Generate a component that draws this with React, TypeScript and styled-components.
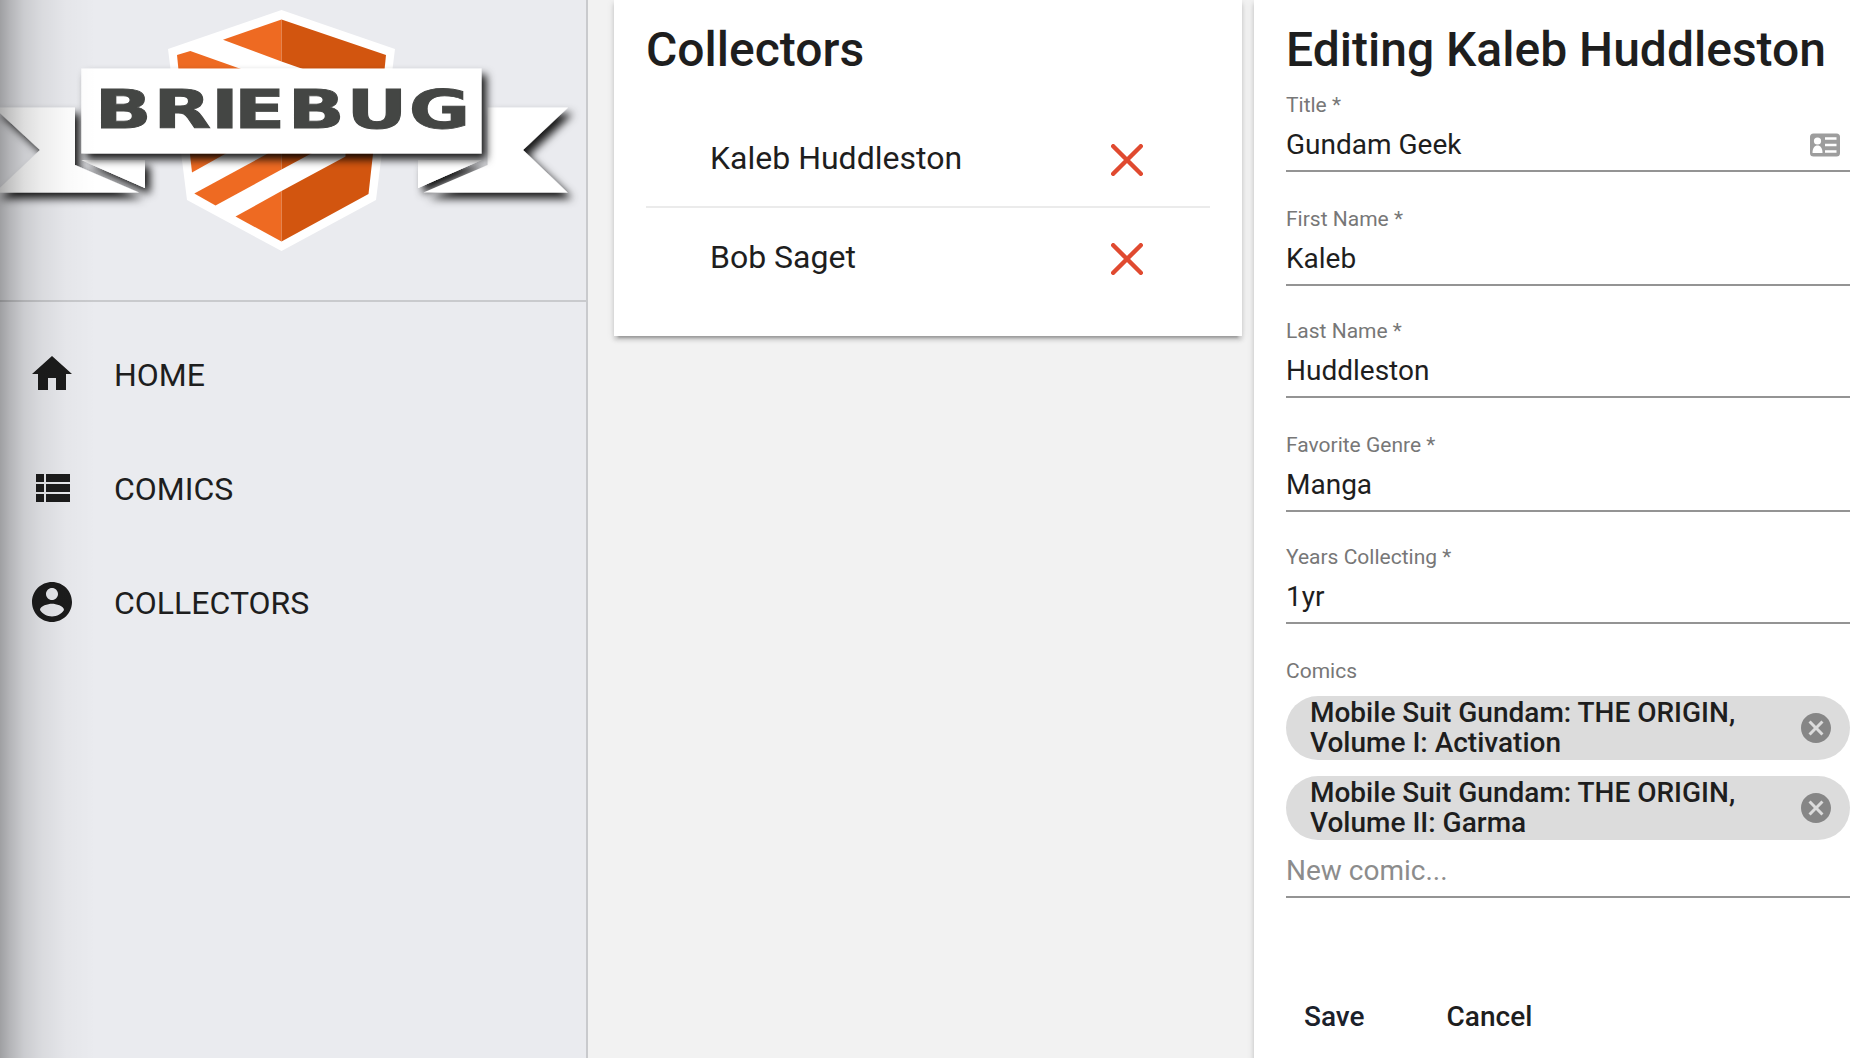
import React from 'react';
import styled, { createGlobalStyle } from 'styled-components';

const GlobalStyle = createGlobalStyle`
  * { box-sizing: border-box; }
  body {
    margin: 0;
    background: #f2f2f2;
    color: #1e1e1e;
    font-family: Roboto, "Liberation Sans", sans-serif;
    overflow: hidden;
  }
`;

const Page = styled.div`
  display: flex;
  width: 1866px;
  height: 1058px;
  overflow: hidden;
`;

const Sidebar = styled.aside`
  position: relative;
  flex: none;
  width: 588px;
  height: 100%;
  background: #eaebef;
  border-right: 2px solid #c9cacd;
`;

const EdgeShade = styled.div`
  position: absolute;
  inset: 0 auto 0 0;
  width: 96px;
  pointer-events: none;
  background: linear-gradient(
    to right,
    rgba(0, 0, 0, 0.32) 0,
    rgba(0, 0, 0, 0.23) 10px,
    rgba(0, 0, 0, 0.135) 24px,
    rgba(0, 0, 0, 0.07) 42px,
    rgba(0, 0, 0, 0.025) 66px,
    rgba(0, 0, 0, 0) 96px
  );
`;

const LogoArea = styled.div`
  height: 302px;
  border-bottom: 2px solid #c9cacd;
  svg { display: block; }
`;

const Nav = styled.nav`
  display: flex;
  flex-direction: column;
  padding-top: 15px;
`;

const NavItem = styled.a`
  display: flex;
  align-items: center;
  gap: 38px;
  height: 114px;
  padding-left: 28px;
  font-size: 32px;
  line-height: 40px;
  span { padding-top: 1px; }
`;

const NavIcon = styled.svg`
  width: 48px;
  height: 48px;
  fill: #1c1c1c;
`;

const Card = styled.section`
  background: #fff;
  box-shadow: 0 6px 2px -4px rgba(0, 0, 0, 0.2), 0 4px 4px rgba(0, 0, 0, 0.14),
    0 2px 8px rgba(0, 0, 0, 0.1);
`;

const ListCard = styled(Card)`
  flex: none;
  width: 628px;
  height: 336px;
  margin-left: 26px;
  padding: 20px 32px 0;
`;

const FormCard = styled(Card)`
  flex: none;
  width: 628px;
  height: 1100px;
  margin-left: 12px;
  padding: 20px 32px 0;
`;

const Heading = styled.h1`
  margin: 0;
  font-size: 48px;
  line-height: 60px;
  font-weight: 500;
  white-space: nowrap;
`;

const List = styled.div`
  padding-top: 30px;
`;

const ListRow = styled.div`
  display: flex;
  align-items: center;
  justify-content: space-between;
  height: 98px;
  padding: 0 67px 0 64px;
  font-size: 32px;
  &:first-child { height: 96px; box-shadow: 0 2px 0 #ebebeb; margin-bottom: 2px; }
`;

const DeleteIcon = styled.svg`
  width: 32px;
  height: 32px;
  margin-top: 4px;
  stroke: #e04a30;
  stroke-width: 4.4;
  stroke-linecap: round;
`;

const Field = styled.div<{ $gap: number }>`
  display: flex;
  flex-direction: column;
  margin-bottom: ${(p) => p.$gap}px;
  border-bottom: 2px solid #949494;
`;

const Label = styled.label`
  height: 26px;
  font-size: 21px;
  line-height: 26px;
  color: #777;
`;

const Value = styled.div`
  display: flex;
  align-items: center;
  justify-content: space-between;
  height: 52px;
  padding-right: 9px;
  font-size: 28px;
  svg { margin-top: 4px; }
`;

const Fields = styled.div`
  padding-top: 12px;
`;

const ChipList = styled.div`
  display: flex;
  flex-direction: column;
  gap: 16px;
  padding-top: 12px;
`;

const Chip = styled.div`
  display: flex;
  align-items: center;
  justify-content: space-between;
  height: 64px;
  padding: 0 16px 0 24px;
  border-radius: 32px;
  background: #dcdcdc;
  font-size: 28px;
  line-height: 30px;
  font-weight: 500;
`;

const ChipText = styled.span`
  width: 450px;
`;

const RemoveIcon = styled.svg`
  width: 36px;
  height: 36px;
  fill: #868686;
`;

const NewComic = styled.div`
  height: 56px;
  padding-top: 14px;
  font-size: 28px;
  line-height: 34px;
  color: #8c8c8c;
`;

const Actions = styled.div`
  display: flex;
  gap: 50px;
  padding: 83px 0 0 2px;
`;

const Button = styled.button<{ $tone?: string }>`
  height: 72px;
  padding: 0 16px;
  border: 0;
  background: none;
  font: 500 28px/72px Roboto, sans-serif;
  color: ${(p) => p.$tone ?? '#1e1e1e'};
`;

const icons = {
  home: 'M10 20v-6h4v6h5v-8h3L12 3 2 12h3v8z',
  list: 'M4 14h4v-4H4v4zm0 5h4v-4H4v4zM4 9h4V5H4v4zm5 5h12v-4H9v4zm0 5h12v-4H9v4zM9 5v4h12V5H9z',
  account:
    'M12 2C6.48 2 2 6.48 2 12s4.48 10 10 10 10-4.48 10-10S17.52 2 12 2zm0 3c1.66 0 3 1.34 3 3s-1.34 3-3 3-3-1.34-3-3 1.34-3 3-3zm0 14.2c-2.5 0-4.71-1.28-6-3.22.03-1.99 4-3.08 6-3.08 1.99 0 5.97 1.09 6 3.08-1.29 1.94-3.5 3.22-6 3.22z',
  cancel:
    'M12 2C6.47 2 2 6.47 2 12s4.47 10 10 10 10-4.47 10-10S17.53 2 12 2zm5 13.59L15.59 17 12 13.41 8.41 17 7 15.59 10.59 12 7 8.41 8.41 7 12 10.59 15.59 7 17 8.41 13.41 12 17 15.59z',
};

const navItems = [
  { label: 'HOME', icon: icons.home },
  { label: 'COMICS', icon: icons.list },
  { label: 'COLLECTORS', icon: icons.account },
];

const collectors = ['Kaleb Huddleston', 'Bob Saget'];

const fields = [
  { label: 'Title *', value: 'Gundam Geek', gap: 34, card: true },
  { label: 'First Name *', value: 'Kaleb', gap: 32 },
  { label: 'Last Name *', value: 'Huddleston', gap: 34 },
  { label: 'Favorite Genre *', value: 'Manga', gap: 32 },
  { label: 'Years Collecting *', value: '1yr', gap: 34 },
];

const comics = [
  'Mobile Suit Gundam: THE ORIGIN, Volume I: Activation',
  'Mobile Suit Gundam: THE ORIGIN, Volume II: Garma',
];

function Logo() {
  return (
    <svg width="586" height="300" viewBox="0 0 586 300">
      <defs>
        <filter id="drop" filterUnits="userSpaceOnUse" x="-80" y="40" width="680" height="200">
          <feDropShadow dx="5" dy="6" stdDeviation="4" floodColor="#000" floodOpacity="0.9" />
        </filter>
      </defs>
      <polygon points="281.5,10 395,49 376,200 281.5,251 187,200 168,49" fill="#fff" />
      <g fill="#ee6a22">
        <polygon points="281.5,19.5 223,39.7 281.5,61.5" />
        <polygon points="177,55 190.3,51 241,69 241,75 179,75" />
        <polygon points="189,145 241,145 192,172.5" />
        <polygon points="194.3,193.5 281.5,146 281.5,169.5 215.5,205.5" />
        <polygon points="235.5,216.5 281.5,191 281.5,241.5" />
      </g>
      <g fill="#d2550f">
        <polygon points="281.5,19.5 386,55 384,75 320,75 281.5,61.5" />
        <polygon points="281.5,145 327,145 281.5,169.5" />
        <polygon points="281.5,191 345.5,156.5 345.5,145 374,145 368.5,194 281.5,241.5" />
      </g>
      <g fill="#fff">
        <polygon points="81.3,160 145,160 145,188" filter="url(#drop)" />
        <polygon points="481.5,160 418,160 418,188" filter="url(#drop)" />
        <polygon
          points="-6,107.5 75,107.5 75,165 139,192.5 -5,192.5 40,150"
          filter="url(#drop)"
        />
        <polygon
          points="487.7,107.5 568,107.5 523,150 567.5,192.5 423.5,192.5 487.7,165"
          filter="url(#drop)"
        />
        <polygon points="81.3,160 145,160 145,188" />
        <polygon points="481.5,160 418,160 418,188" />
        <rect x="81.3" y="68.5" width="400.2" height="85" filter="url(#drop)" />
      </g>
      <text
        transform="scale(1.4 1)"
        x="67.6 109.7 150.8 167.2 205.5 247.5 292"
        y="128"
        fontFamily="'DejaVu Sans', sans-serif"
        fontWeight="700"
        fontSize="53.5"
        fill="#444644"
        stroke="#444644"
        strokeWidth="0.9"
      >
        BRIEBUG
      </text>
    </svg>
  );
}

function ContactCardIcon() {
  return (
    <svg width="32" height="28" viewBox="0 0 32 28">
      <rect x="1" y="1.5" width="30" height="23" rx="3.5" fill="#9d9d9d" />
      <circle cx="8.5" cy="9" r="3.6" fill="#fff" />
      <path d="M3.5 21c0-5 2-7.500 5-7.500s5 2.500 5 7.500z" fill="#fff" />
      <path d="M16 6.500h11.500M16 13h11.500M16 19.500h11.500" stroke="#fff" strokeWidth="2.600" />
    </svg>
  );
}

export default function App() {
  return (
    <Page>
      <GlobalStyle />
      <Sidebar>
        <LogoArea>
          <Logo />
        </LogoArea>
        <Nav>
          {navItems.map((item) => (
            <NavItem key={item.label}>
              <NavIcon viewBox="0 0 24 24">
                <path d={item.icon} />
              </NavIcon>
              <span>{item.label}</span>
            </NavItem>
          ))}
        </Nav>
        <EdgeShade />
      </Sidebar>
      <ListCard>
        <Heading>Collectors</Heading>
        <List>
          {collectors.map((name) => (
            <ListRow key={name}>
              <span>{name}</span>
              <DeleteIcon viewBox="0 0 32 32">
                <path d="M2.200 2.200 29.800 29.800M29.800 2.200 2.200 29.800" />
              </DeleteIcon>
            </ListRow>
          ))}
        </List>
      </ListCard>
      <FormCard>
        <Heading>Editing Kaleb Huddleston</Heading>
        <Fields>
          {fields.map((f) => (
            <Field key={f.label} $gap={f.gap}>
              <Label>{f.label}</Label>
              <Value>
                {f.value}
                {f.card && <ContactCardIcon />}
              </Value>
            </Field>
          ))}
          <Field $gap={0}>
            <Label>Comics</Label>
            <ChipList>
              {comics.map((c) => (
                <Chip key={c}>
                  <ChipText>{c}</ChipText>
                  <RemoveIcon viewBox="0 0 24 24">
                    <path d={icons.cancel} />
                  </RemoveIcon>
                </Chip>
              ))}
            </ChipList>
            <NewComic>New comic...</NewComic>
          </Field>
        </Fields>
        <Actions>
          <Button $tone="#1b212b">Save</Button>
          <Button>Cancel</Button>
        </Actions>
      </FormCard>
    </Page>
  );
}
